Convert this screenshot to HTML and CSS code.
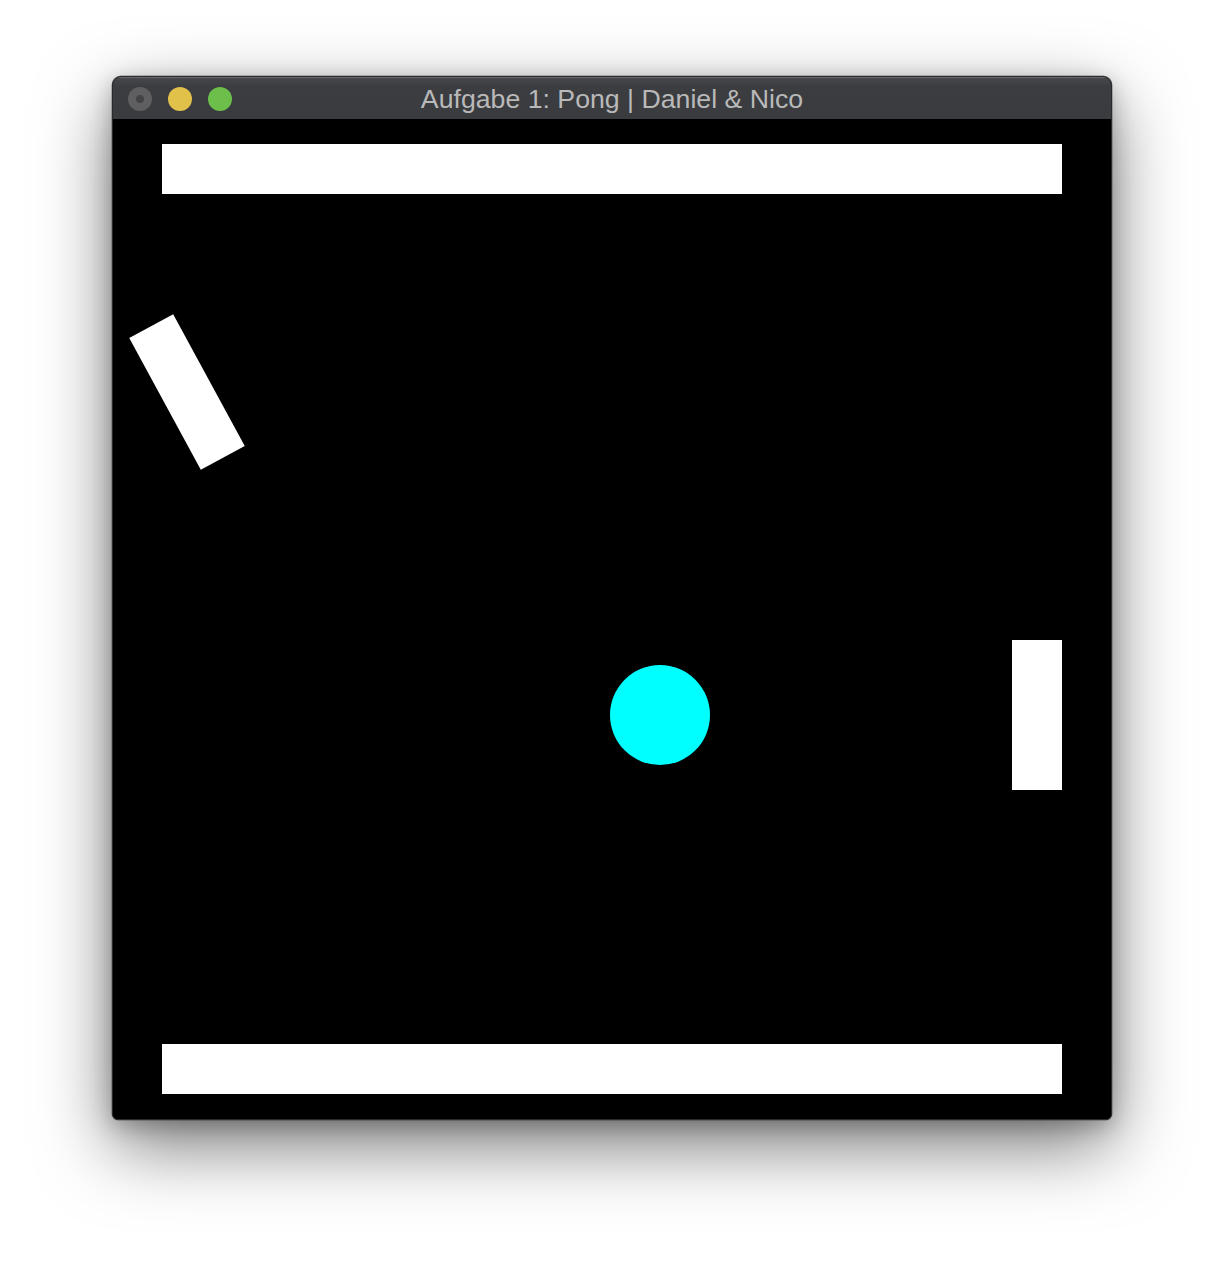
FILE: index.html
```html
<!DOCTYPE html>
<html>
<head>
<meta charset="utf-8">
<title>Aufgabe 1: Pong</title>
<link rel="stylesheet" href="styles.css">
</head>
<body>
<div class="window">
  <div class="titlebar">
    <div class="lights">
      <span class="light light-close"><span class="dot"></span></span>
      <span class="light light-min"></span>
      <span class="light light-max"></span>
    </div>
    <div class="title">Aufgabe 1: Pong | Daniel &amp; Nico</div>
  </div>
  <div class="canvas">
    <div class="wall wall-top"></div>
    <div class="paddle paddle-left"></div>
    <div class="paddle paddle-right"></div>
    <div class="ball"></div>
    <div class="wall wall-bottom"></div>
  </div>
</div>
</body>
</html>
```
FILE: styles.css
```css
html, body {
  margin: 0;
  padding: 0;
  background: #ffffff;
}
body {
  width: 1224px;
  height: 1268px;
  overflow: hidden;
  padding: 76px 0 0 112px;
  box-sizing: border-box;
}
.window {
  width: 1000px;
  height: 1044px;
  box-sizing: border-box;
  border: 1px solid #2a2a2c;
  border-radius: 9px 9px 6px 6px;
  background: #000;
  overflow: hidden;
  display: flex;
  flex-direction: column;
  box-shadow: 0 0 0 0.5px rgba(0,0,0,0.4), 0 26px 72px rgba(0,0,0,0.52), 0 6px 22px rgba(0,0,0,0.25);
}
.titlebar {
  height: 42px;
  flex: none;
  background: linear-gradient(#47484b, #3c3d40 20%, #3a3b3e);
  border-top: 1px solid #69696c;
  box-sizing: border-box;
  display: flex;
  align-items: center;
  position: relative;
}
.lights {
  display: flex;
  gap: 16px;
  padding-left: 15px;
}
.light {
  width: 24px;
  height: 24px;
  border-radius: 50%;
  display: flex;
  align-items: center;
  justify-content: center;
}
.light-close { background: #5f5f62; }
.light-close .dot {
  width: 8px;
  height: 8px;
  border-radius: 50%;
  background: #434346;
}
.light-min { background: #e2c14b; }
.light-max { background: #6bbf4a; }
.title {
  position: absolute;
  left: 0;
  right: 0;
  top: 0;
  bottom: 0;
  display: flex;
  align-items: center;
  justify-content: center;
  font-family: "Liberation Sans", Arial, sans-serif;
  font-size: 26.7px;
  color: #b9b9ba;
  padding-top: 2px;
}
.canvas {
  flex: 1;
  position: relative;
  background: #000;
}
.wall {
  position: absolute;
  left: 49px;
  width: 900px;
  height: 50px;
  background: #fff;
}
.wall-top { top: 25px; }
.wall-bottom { top: 925px; }
.paddle {
  position: absolute;
  width: 50px;
  height: 150px;
  background: #fff;
}
.paddle-right {
  left: 899px;
  top: 521px;
}
.paddle-left {
  left: 49px;
  top: 198px;
  transform: rotate(-28.5deg);
}
.ball {
  position: absolute;
  left: 497px;
  top: 546px;
  width: 100px;
  height: 100px;
  border-radius: 50%;
  background: #00ffff;
}
```
